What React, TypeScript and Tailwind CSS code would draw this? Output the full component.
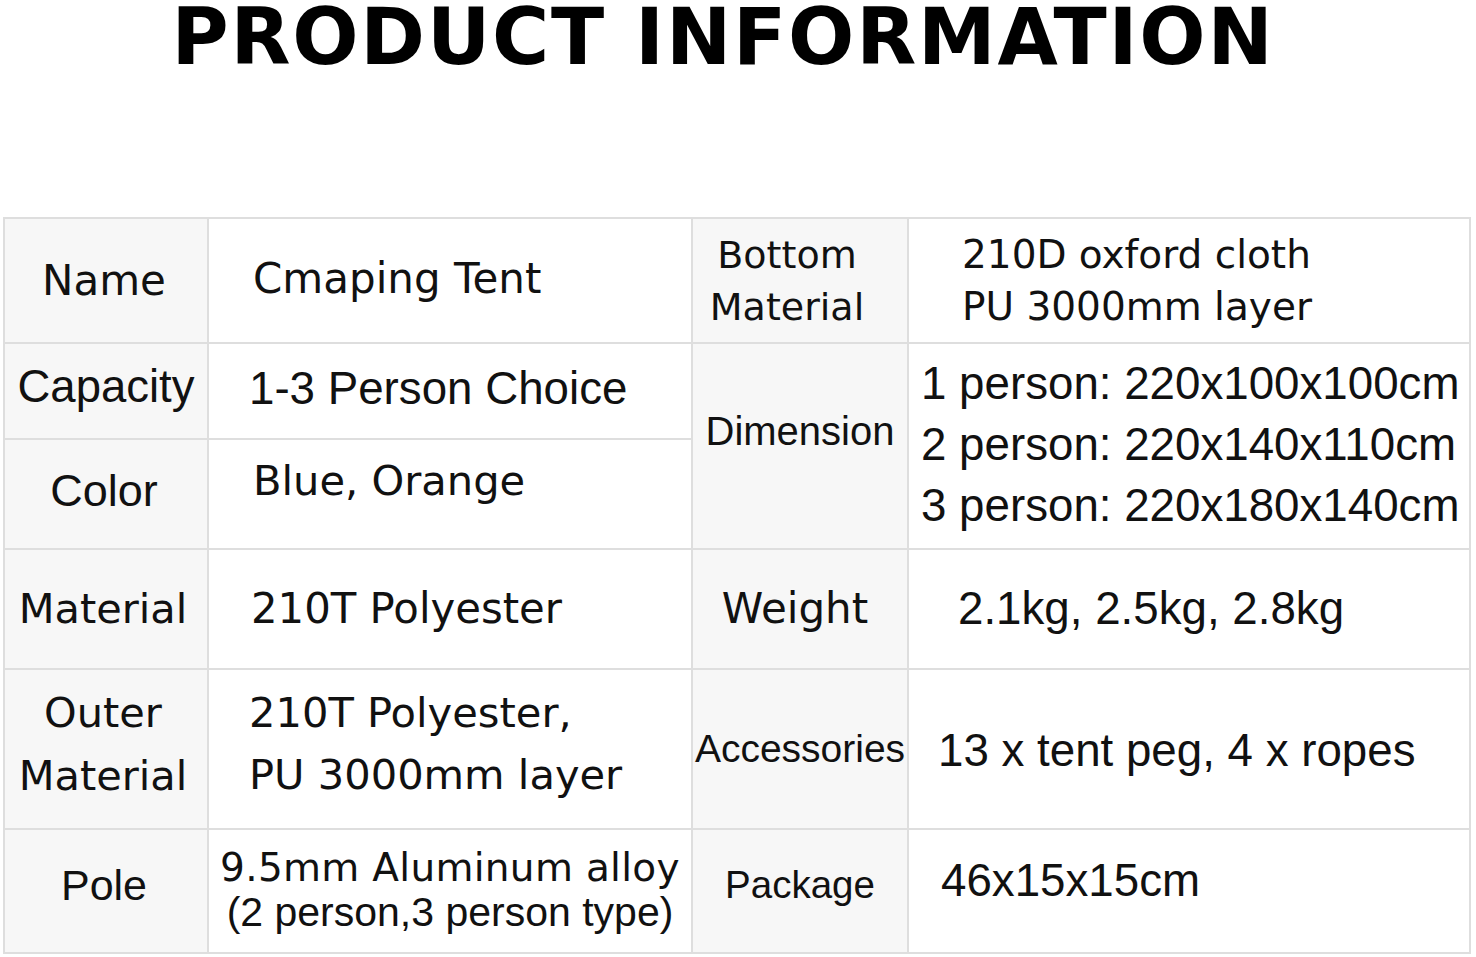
import type { ReactNode } from 'react'

const verdana = "font-['DejaVu_Sans',Verdana,sans-serif]"
const arial = "font-['Liberation_Sans',Arial,sans-serif]"

type CellProps = {
  children: ReactNode
  label?: boolean
  className?: string
}

function Cell({ children, label, className = '' }: CellProps) {
  return (
    <div
      className={`flex items-center text-[#111] ${label ? 'justify-center bg-[#f7f7f7] text-center' : 'bg-white'} ${className}`}
    >
      {children}
    </div>
  )
}

export default function App() {
  return (
    <div className="min-h-[957px] w-[1476px] bg-white">
      <div className="h-[217px] pr-[30px] pt-[1px] text-center">
        <h1 className={`${verdana} text-[78px] font-bold leading-[72px] tracking-[1.8px] text-black`}>
          PRODUCT INFORMATION
        </h1>
      </div>

      <div className="ml-[3px] grid w-[1468px] grid-cols-[202px_482px_214px_560px] grid-rows-[123px_94px_108px_118px_158px_122px] gap-[2px] bg-[#dedede] p-[2px]">
        {/* row 1 */}
        <Cell label className={`${verdana} pr-[4px] text-[42px]`}>Name</Cell>
        <Cell className={`${verdana} pl-[44px] pb-[4px] text-[42px]`}>Cmaping Tent</Cell>
        <Cell label className={`${verdana} pr-[26px] text-[38px] leading-[52px]`}>
          Bottom
          <br />
          Material
        </Cell>
        <Cell className={`${verdana} pl-[53px] text-[39px] leading-[52px]`}>
          <div>
            210D oxford cloth
            <br />
            PU 3000mm layer
          </div>
        </Cell>

        {/* rows 2-3 */}
        <Cell label className={`${arial} pb-[8px] text-[45.5px]`}>Capacity</Cell>
        <Cell className={`${arial} pl-[40px] pb-[4px] text-[45.7px]`}>1-3 Person Choice</Cell>
        <Cell label className={`${arial} row-span-2 pb-[30px] text-[40px]`}>Dimension</Cell>
        <Cell className={`${arial} row-span-2 pl-[12px] pb-[4px] text-[45.7px] leading-[61px]`}>
          <div>
            1 person: 220x100x100cm
            <br />
            2 person: 220x140x110cm
            <br />
            3 person: 220x180x140cm
          </div>
        </Cell>
        <Cell label className={`${arial} pb-[6px] pr-[4px] text-[45px]`}>Color</Cell>
        <Cell className={`${verdana} pl-[44px] pb-[26px] text-[41.6px]`}>Blue, Orange</Cell>

        {/* row 4 */}
        <Cell label className={`${verdana} pr-[6px] text-[41.5px]`}>Material</Cell>
        <Cell className={`${verdana} pl-[42px] text-[41.8px]`}>210T Polyester</Cell>
        <Cell label className={`${verdana} pr-[10px] pb-[2px] text-[42px]`}>Weight</Cell>
        <Cell className={`${arial} pl-[49px] text-[45.7px]`}>2.1kg, 2.5kg, 2.8kg</Cell>

        {/* row 5 */}
        <Cell label className={`${verdana} pb-[10px] pr-[6px] text-[41.5px] leading-[63px]`}>
          Outer
          <br />
          Material
        </Cell>
        <Cell className={`${verdana} pl-[40px] pb-[10px] text-[41.6px] leading-[62px]`}>
          <div>
            210T Polyester,
            <br />
            PU 3000mm layer
          </div>
        </Cell>
        <Cell label className={`${arial} text-[39px]`}>Accessories</Cell>
        <Cell className={`${arial} pl-[29px] pt-[4px] text-[45.7px]`}>13 x tent peg, 4 x ropes</Cell>

        {/* row 6 */}
        <Cell label className={`${arial} pb-[12px] pr-[4px] text-[43px]`}>Pole</Cell>
        <Cell className="justify-center pb-[2px] text-center">
          <div>
            <div className={`${verdana} text-[39px] leading-[44px] tracking-[0.3px]`}>9.5mm Aluminum alloy</div>
            <div className={`${arial} text-[41px] leading-[44px]`}>(2 person,3 person type)</div>
          </div>
        </Cell>
        <Cell label className={`${arial} pb-[12px] text-[38.5px]`}>Package</Cell>
        <Cell className={`${arial} pl-[32px] pb-[20px] text-[45.7px]`}>46x15x15cm</Cell>
      </div>
    </div>
  )
}
